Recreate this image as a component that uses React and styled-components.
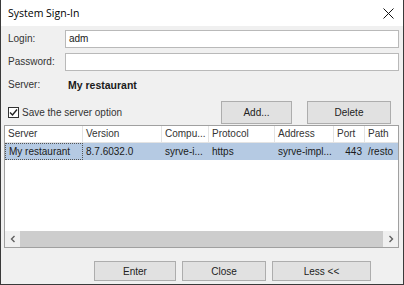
import styled, { createGlobalStyle } from 'styled-components';

const Global = createGlobalStyle`
    html, body {
        margin: 0;
        padding: 0;
        background: #f0f0f0;
    }
    * { box-sizing: border-box; }
`;

const Window = styled.div`
    width: 404px;
    height: 285px;
    display: flex;
    flex-direction: column;
    background: #f0f0f0;
    border: 1px solid #3a3a3a;
    border-top: none;
    font-family: "Liberation Sans", Arial, sans-serif;
    font-size: 10px;
    color: #1a1a1a;
    overflow: hidden;
`;

const TitleBar = styled.div`
    height: 26px;
    flex: none;
    display: flex;
    align-items: center;
    justify-content: space-between;
    background: #ffffff;
    padding: 0 9px 0 7px;
    font-family: "Open Sans", "Liberation Sans", sans-serif;
    font-size: 10.5px;
    color: #000;
`;

const Body = styled.div`
    flex: 1;
    display: flex;
    flex-direction: column;
    padding: 4px 4px 0 3px;
`;

const Form = styled.div`
    display: grid;
    grid-template-columns: 57px 1fr;
    row-gap: 5px;
    align-items: center;
    padding-left: 4px;
`;

const Label = styled.div`
    color: #333;
    line-height: 18px;
`;

const Input = styled.div`
    height: 18px;
    background: #fff;
    border: 1px solid #b9b9b9;
    padding: 0 3px;
    line-height: 16px;
`;

const ServerName = styled.div`
    font-weight: bold;
    font-size: 10.5px;
    padding-left: 3px;
    line-height: 16px;
`;

const OptionsRow = styled.div`
    display: flex;
    align-items: center;
    margin-top: 6px;
    height: 24px;
    padding: 0 8px 0 4px;
`;

const CheckLabel = styled.label`
    display: flex;
    align-items: center;
    gap: 3px;
    flex: 1;
    color: #333;
`;

const Box = styled.span`
    width: 11px;
    height: 11px;
    border: 1px solid #333;
    background: #fff;
    display: flex;
    align-items: center;
    justify-content: center;
`;

const Button = styled.div`
    width: ${p => p.w}px;
    height: ${p => p.h || 23}px;
    margin-left: ${p => p.ml || 0}px;
    background: #e1e1e1;
    border: 1px solid #adadad;
    display: flex;
    align-items: center;
    justify-content: center;
    color: #222;
`;

const Table = styled.div`
    margin-top: 1px;
    height: 123px;
    background: #fff;
    border: 1px solid #a0a0a0;
    display: flex;
    flex-direction: column;
`;

const Grid = styled.div`
    flex: 1;
    display: grid;
    grid-template-columns: 78px 79px 47px 66px 59px 31px 34px;
    grid-auto-rows: 17px;
    align-content: start;
    overflow: hidden;
`;

const Head = styled.div`
    border-right: 1px solid #e3e3e3;
    border-bottom: 1px solid #e3e3e3;
    padding: 0 3px;
    line-height: 16px;
    color: #333;
    white-space: nowrap;
    overflow: hidden;
`;

const Cell = styled.div`
    background: #b5cae3;
    padding: 0 3px;
    white-space: nowrap;
    overflow: hidden;
    text-align: ${p => p.right ? 'right' : 'left'};
    border: ${p => p.focus ? '1px dotted #555' : 'none'};
    line-height: ${p => p.focus ? '15px' : '17px'};
`;

const ScrollBar = styled.div`
    height: 16px;
    flex: none;
    display: flex;
    background: #f0f0f0;
`;

const Arrow = styled.div`
    width: 15px;
    display: flex;
    align-items: center;
    justify-content: center;
`;

const Thumb = styled.div`
    flex: 1;
    background: #cdcdcd;
`;

const Footer = styled.div`
    display: flex;
    margin-top: 13px;
    padding-left: 90px;
    gap: 6px;
`;

const Chevron = ({ dir }) => (
    <svg width="6" height="8" viewBox="0 0 6 8">
        <path d={dir === 'left' ? 'M4.5 1 L1.5 4 L4.5 7' : 'M1.5 1 L4.5 4 L1.5 7'} fill="none" stroke="#606060" strokeWidth="1.4" />
    </svg>
);

const App = () => {
    return (
        <>
            <Global />
            <Window>
                <TitleBar>
                    <span>System Sign-In</span>
                    <svg width="11" height="11" viewBox="0 0 11 11">
                        <path d="M0.5 0.5 L10.5 10.5 M10.5 0.5 L0.5 10.5" stroke="#111" strokeWidth="1" />
                    </svg>
                </TitleBar>
                <Body>
                    <Form>
                        <Label>Login:</Label>
                        <Input>adm</Input>
                        <Label>Password:</Label>
                        <Input />
                        <Label>Server:</Label>
                        <ServerName>My restaurant</ServerName>
                    </Form>
                    <OptionsRow>
                        <CheckLabel>
                            <Box>
                                <svg width="9" height="9" viewBox="0 0 9 9">
                                    <path d="M1 4.5 L3.5 7 L8 1.5" fill="none" stroke="#222" strokeWidth="1.4" />
                                </svg>
                            </Box>
                            Save the server option
                        </CheckLabel>
                        <Button w={71}>Add...</Button>
                        <Button w={84} ml={15}>Delete</Button>
                    </OptionsRow>
                    <Table>
                        <Grid>
                            <Head>Server</Head>
                            <Head>Version</Head>
                            <Head>Compu...</Head>
                            <Head>Protocol</Head>
                            <Head>Address</Head>
                            <Head>Port</Head>
                            <Head>Path</Head>
                            <Cell focus>My restaurant</Cell>
                            <Cell>8.7.6032.0</Cell>
                            <Cell>syrve-i...</Cell>
                            <Cell>https</Cell>
                            <Cell>syrve-impl...</Cell>
                            <Cell right>443</Cell>
                            <Cell>/resto</Cell>
                        </Grid>
                        <ScrollBar>
                            <Arrow><Chevron dir="left" /></Arrow>
                            <Thumb />
                            <Arrow><Chevron dir="right" /></Arrow>
                        </ScrollBar>
                    </Table>
                    <Footer>
                        <Button w={82} h={20}>Enter</Button>
                        <Button w={84} h={20}>Close</Button>
                        <Button w={99} h={20}>Less &lt;&lt;</Button>
                    </Footer>
                </Body>
            </Window>
        </>
    );
};

export default App;
